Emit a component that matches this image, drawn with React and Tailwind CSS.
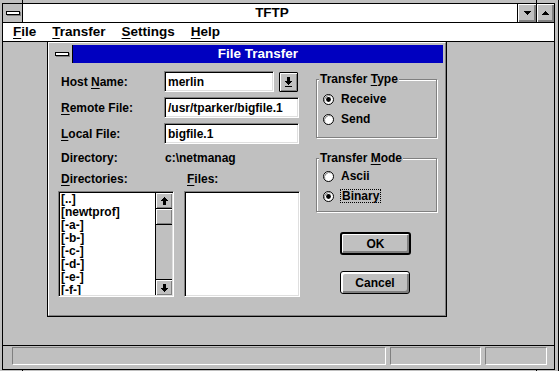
import React from "react";

const bevel = "bg-[#c0c0c0] shadow-[inset_1px_1px_0_#fff,inset_-1px_-1px_0_#808080]";
const sunken =
  "border border-t-[#808080] border-l-[#808080] border-r-white border-b-white shadow-[inset_1px_1px_0_#000,inset_-1px_-1px_0_#dfdfdf] bg-white";

function U({ children }) {
  return <span className="underline decoration-1 underline-offset-[2px]">{children}</span>;
}

function Tri({ up }) {
  return (
    <svg width="7" height="4" viewBox="0 0 7 4" shapeRendering="crispEdges" className={up ? "rotate-180" : ""}>
      <path d="M0 0h7v1H6v1H5v1H4v1H3V3H2V2H1V1H0z" fill="#000" />
    </svg>
  );
}

function Arrow({ down }) {
  return (
    <svg width="7" height="8" viewBox="0 0 7 8" shapeRendering="crispEdges" className={down ? "rotate-180" : ""}>
      <path d="M3 0h1v1h1v1h1v1h1v1H5v4H2V4H0V3h1V2h1V1h1z" fill="#000" />
    </svg>
  );
}

function ComboArrow() {
  return (
    <svg width="7" height="10" viewBox="0 0 7 10" shapeRendering="crispEdges">
      <path d="M2 0h3v4h2v1H6v1H5v1H4v1H3V7H2V6H1V5H0V4h2z" fill="#000" />
      <rect x="0" y="9" width="7" height="1" fill="#000" />
    </svg>
  );
}

function SysBar() {
  return <div className="h-[4px] w-[14px] border border-black bg-white shadow-[1px_1px_0_#808080]" />;
}

function Radio({ on }) {
  return (
    <svg width="11" height="11" viewBox="0 0 11 11">
      <circle cx="5.5" cy="5.5" r="5" fill="#fff" stroke="#000" />
      <path d="M1.8 8.2A5 5 0 0 1 8.2 1.8" fill="none" stroke="#808080" strokeWidth="1" />
      {on && <circle cx="5.5" cy="5.5" r="2.4" fill="#000" />}
    </svg>
  );
}

function Field({ w, children }) {
  return (
    <div className={`${sunken} ${w} flex h-[21px] items-center pl-[3px] leading-[14px]`}>{children}</div>
  );
}

function Group({ label, h, mt, children }) {
  return (
    <fieldset className={`${h} ${mt} border border-[#808080] shadow-[inset_1px_1px_0_#fff,1px_1px_0_#fff]`}>
      <legend className="ml-[2px] bg-[#c0c0c0] px-[1px] leading-[14px]">{label}</legend>
      {children}
    </fieldset>
  );
}

function Listbox({ items, scroll }) {
  return (
    <div className={`${sunken} h-[106px] w-[116px] p-[1px]`}>
      <div className="flex h-full overflow-hidden">
        <div className="flex-1 overflow-hidden pl-[1px] leading-[13px]">
          {items.map((t) => (
            <div key={t}>{t}</div>
          ))}
        </div>
        {scroll && (
          <div className="flex w-[17px] flex-col border-l border-black bg-[#c0c0c0]">
            <div className={`${bevel} flex h-[16px] items-center justify-center border-b border-black`}>
              <Arrow />
            </div>
            <div className={`${bevel} h-[16px] border-b border-black`} />
            <div className="flex-1" />
            <div className={`${bevel} flex h-[16px] items-center justify-center border-t border-black`}>
              <Arrow down />
            </div>
          </div>
        )}
      </div>
    </div>
  );
}

export default function App() {
  const dirs = ["[..]", "[newtprof]", "[-a-]", "[-b-]", "[-c-]", "[-d-]", "[-e-]", "[-f-]"];

  return (
    <div className="relative h-[371px] w-[559px] overflow-hidden border-r border-black bg-[#c0c0c0] font-['Liberation_Sans',Arial,sans-serif] text-[12px] font-bold text-black">
      {/* frame resize notches */}
      <div className="absolute left-[22px] top-0 h-[3px] w-px bg-black" />
      <div className="absolute left-[536px] top-0 h-[3px] w-px bg-black" />
      <div className="absolute bottom-0 left-[22px] h-[2px] w-px bg-black" />
      <div className="absolute bottom-0 left-[536px] h-[2px] w-px bg-black" />

      <div className="ml-[2px] mt-[3px] flex h-[367px] w-[553px] flex-col border border-black">
        {/* title bar */}
        <div className="flex h-[19px] border-b border-black bg-white">
          <div className="flex w-[20px] items-center justify-center border-r border-black bg-[#c0c0c0]">
            <SysBar />
          </div>
          <div className="flex-1 pl-[4px] text-center text-[13.5px] leading-[18px]">TFTP</div>
          <div className="flex w-[19px] items-center justify-center border-l border-black bg-[#c0c0c0] shadow-[inset_1px_1px_0_#fff,inset_-1px_-1px_0_#808080,inset_-2px_-2px_0_#808080]">
            <Tri />
          </div>
          <div className="flex w-[18px] items-center justify-center border-l border-black bg-[#c0c0c0] shadow-[inset_1px_1px_0_#fff,inset_-1px_-1px_0_#808080,inset_-2px_-2px_0_#808080]">
            <Tri up />
          </div>
        </div>

        {/* menu bar */}
        <div className="flex h-[19px] items-center gap-[16px] border-b border-black bg-white pl-[10px] text-[13.5px] leading-[18px]">
          <span><U>F</U>ile</span>
          <span><U>T</U>ransfer</span>
          <span><U>S</U>ettings</span>
          <span><U>H</U>elp</span>
        </div>

        {/* client area */}
        <div className="h-[304px] border-b border-black pl-[44px]">
          <div className="h-[275px] w-[400px] border-x border-b border-black">
            <div className="flex h-full flex-col border border-b-[#808080] border-l-white border-r-[#808080] border-t-white p-[2px]">
              {/* dialog caption */}
              <div className="flex h-[18px]">
                <div className="flex w-[22px] items-center justify-center border-r border-black bg-[#c0c0c0]">
                  <SysBar />
                </div>
                <div className="flex-1 bg-[#0000c0] text-center text-[13.5px] leading-[18px] text-white">File Transfer</div>
              </div>

              {/* dialog body */}
              <div className="flex flex-1 pl-[7px] pt-[8px]">
                <div className="w-[242px]">
                  <div className="flex h-[21px] items-center">
                    <div className="w-[106px] pl-[3px]">Host <U>N</U>ame:</div>
                    <Field w="w-[110px]">merlin</Field>
                    <div className={`ml-[5px] flex h-[20px] w-[19px] items-center justify-center rounded-[1px] border border-black ${bevel}`}>
                      <ComboArrow />
                    </div>
                  </div>
                  <div className="mt-[5px] flex h-[21px] items-center">
                    <div className="w-[106px] pl-[3px]"><U>R</U>emote File:</div>
                    <Field w="w-[135px]">/usr/tparker/bigfile.1</Field>
                  </div>
                  <div className="mt-[5px] flex h-[21px] items-center">
                    <div className="w-[106px] pl-[3px]"><U>L</U>ocal File:</div>
                    <Field w="w-[135px]">bigfile.1</Field>
                  </div>
                  <div className="mt-[7px] flex h-[14px] leading-[14px]">
                    <div className="w-[107px] pl-[3px]">Directory:</div>
                    <div>c:\netmanag</div>
                  </div>
                  <div className="mt-[7px] flex h-[14px] leading-[14px]">
                    <div className="w-[129px] pl-[3px]"><U>D</U>irectories:</div>
                    <div><U>F</U>iles:</div>
                  </div>
                  <div className="mt-[5px] flex gap-[10px]">
                    <Listbox items={dirs} scroll />
                    <Listbox items={[]} />
                  </div>
                </div>

                <div className="ml-[16px] w-[121px]">
                  <Group label={<>Transfer <U>T</U>ype</>} h="h-[66px]" mt="mt-[1px]">
                    <div className="ml-[6px] mt-[5px] flex h-[16px] items-center">
                      <Radio on />
                      <span className="ml-[7px]">Receive</span>
                    </div>
                    <div className="ml-[6px] mt-[4px] flex h-[16px] items-center">
                      <Radio />
                      <span className="ml-[7px]">Send</span>
                    </div>
                  </Group>
                  <Group label={<>Transfer <U>M</U>ode</>} h="h-[61px]" mt="mt-[13px]">
                    <div className="ml-[6px] mt-[3px] flex h-[16px] items-center">
                      <Radio />
                      <span className="ml-[7px]">Ascii</span>
                    </div>
                    <div className="ml-[6px] mt-[4px] flex h-[16px] items-center">
                      <Radio on />
                      <span className="ml-[6px] border border-dotted border-black px-[1px] leading-[12px]">Binary</span>
                    </div>
                  </Group>
                  <div className={`ml-[24px] mt-[20px] flex h-[23px] w-[71px] items-center justify-center rounded-[3px] border-2 border-black ${bevel} shadow-[inset_1px_1px_0_#fff,inset_-2px_-2px_0_#808080]`}>
                    OK
                  </div>
                  <div className={`ml-[24px] mt-[16px] flex h-[23px] w-[70px] items-center justify-center rounded-[3px] border border-black bg-[#c0c0c0] shadow-[inset_1px_1px_0_#fff,inset_2px_2px_0_#fff,inset_-2px_-2px_0_#808080]`}>
                    Cancel
                  </div>
                </div>
              </div>
            </div>
          </div>
        </div>

        {/* status bar */}
        <div className="flex h-[23px] gap-[4px] pl-[9px] pt-[1px]">
          <div className="h-[18px] w-[374px] border border-b-white border-l-[#808080] border-r-white border-t-[#808080]" />
          <div className="h-[18px] w-[91px] border border-b-white border-l-[#808080] border-r-white border-t-[#808080]" />
          <div className="h-[18px] w-[62px] border border-b-white border-l-[#808080] border-r-white border-t-[#808080]" />
        </div>
      </div>
    </div>
  );
}
